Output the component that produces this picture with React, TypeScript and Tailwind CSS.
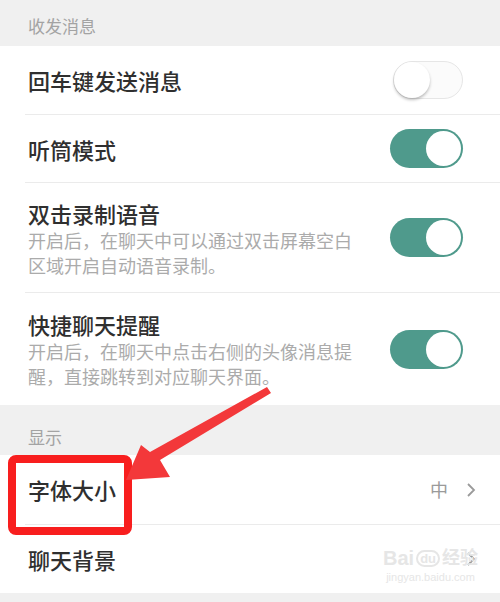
const font = { fontFamily: '"Noto Sans CJK SC", "Noto Sans", sans-serif' };

function Toggle({ on }: { on: boolean }) {
  if (on) {
    return (
      <div className="flex h-[39px] w-[73px] shrink-0 items-center justify-end rounded-full bg-[#4f9a8c] p-[2px]">
        <div className="h-[35px] w-[35px] rounded-full bg-white" />
      </div>
    );
  }
  return (
    <div className="flex h-[38px] w-[70px] shrink-0 items-center rounded-full border border-[#e6e6e6] bg-[#fbfbfb]">
      <div className="h-[36px] w-[36px] rounded-full bg-white shadow-[0_2px_3px_rgba(0,0,0,0.25)]" />
    </div>
  );
}

const switches = [
  { title: "回车键发送消息", on: false, h: "h-[69px]" },
  { title: "听筒模式", on: true, h: "h-[68px]" },
  {
    title: "双击录制语音",
    on: true,
    h: "h-[110px]",
    lines: ["开启后，在聊天中可以通过双击屏幕空白", "区域开启自动语音录制。"],
  },
  {
    title: "快捷聊天提醒",
    on: true,
    h: "h-[112px]",
    lines: ["开启后，在聊天中点击右侧的头像消息提", "醒，直接跳转到对应聊天界面。"],
  },
];

function Chevron() {
  return (
    <svg width="10" height="16" viewBox="0 0 10 16" fill="none">
      <path d="M2 2l6 6-6 6" stroke="#9a9a9a" strokeWidth="1.8" />
    </svg>
  );
}

export default function App() {
  return (
    <div className="relative h-[602px] w-[500px] overflow-hidden bg-[#f0f0f0]" style={font}>
      <div className="flex h-[46px] items-center bg-[#f0f0f0] pl-[28px] pt-[6px] text-[17px] text-[#a3a3a3]">
        收发消息
      </div>

      <div className="bg-white">
        {switches.map((s, i) => (
          <div key={s.title} className={`flex ${s.h}`}>
            <div
              className={`ml-[25px] flex flex-1 items-center justify-between pr-[37px] ${
                i < switches.length - 1 ? "border-b border-[#ebebeb]" : ""
              }`}
            >
              <div className="pl-[3px]">
                <div className="text-[22px] font-medium leading-[30px] text-[#2f2f2f]">{s.title}</div>
                {s.lines &&
                  s.lines.map((l) => (
                    <div key={l} className="text-[18px] leading-[25px] text-[#ababab]">
                      {l}
                    </div>
                  ))}
              </div>
              <Toggle on={s.on} />
            </div>
          </div>
        ))}
      </div>

      <div className="flex h-[50px] items-center bg-[#f0f0f0] pl-[28px] pt-[14px] text-[17px] text-[#a3a3a3]">
        显示
      </div>

      <div className="bg-white">
        <div className="flex h-[70px]">
          <div className="ml-[25px] flex flex-1 items-center justify-between border-b border-[#ebebeb] pr-[24px]">
            <span className="pl-[3px] text-[22px] font-medium text-[#2f2f2f]">字体大小</span>
            <div className="flex items-center gap-[18px] text-[#9a9a9a]">
              <span className="text-[18px]">中</span>
              <Chevron />
            </div>
          </div>
        </div>
        <div className="flex h-[68px]">
          <div className="ml-[25px] flex flex-1 items-center justify-between pr-[24px]">
            <span className="pl-[3px] text-[22px] font-medium text-[#2f2f2f]">聊天背景</span>
            <Chevron />
          </div>
        </div>
      </div>

      {/* watermark */}
      <div className="pointer-events-none absolute left-[383px] top-[548px] flex flex-col items-center text-[#e6e6e6]">
        <div
          className="flex items-center gap-[2px] text-[20px] font-bold leading-none"
          style={{ fontFamily: '"Liberation Sans", "Noto Sans CJK SC", sans-serif' }}
        >
          <span>Bai</span>
          <span className="rounded-full border-2 border-[#e6e6e6] px-[2px] text-[13px]">du</span>
          <span className="text-[18px]">经验</span>
        </div>
        <div className="mt-[4px] text-[11px] leading-none" style={{ fontFamily: '"Liberation Sans", sans-serif' }}>
          jingyan.baidu.com
        </div>
      </div>

      {/* annotation */}
      <div className="pointer-events-none absolute left-[8px] top-[455px] h-[80px] w-[124px] rounded-[8px] border-[8px] border-[#f81e1e]" />
      <svg className="pointer-events-none absolute left-0 top-0" width="500" height="602" viewBox="0 0 500 602">
        <polygon points="267,387 271,393 160,460 170,477 126,480 141,445 150,452" fill="#f3383a" />
      </svg>
    </div>
  );
}
